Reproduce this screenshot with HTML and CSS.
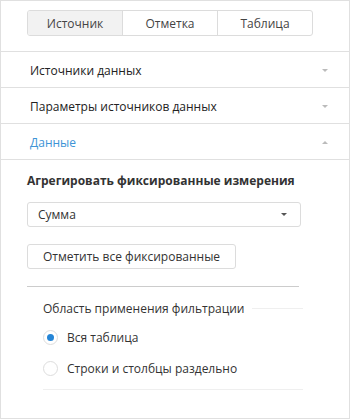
FILE: index.html
```html
<!DOCTYPE html>
<html>
<head>
    <title>Источник</title>
    <link rel="stylesheet" href="styles.css">
</head>
<body>
    <div class="panel">
        <div class="tabs-bar">
            <div class="tabs">
                <div class="tab active">Источник</div>
                <div class="tab">Отметка</div>
                <div class="tab">Таблица</div>
            </div>
        </div>

        <div class="section">
            <div class="section-head">
                <span>Источники данных</span>
                <span class="arrow down"></span>
            </div>
        </div>
        <div class="section">
            <div class="section-head">
                <span>Параметры источников данных</span>
                <span class="arrow down"></span>
            </div>
        </div>
        <div class="section open">
            <div class="section-head">
                <span>Данные</span>
                <span class="arrow up"></span>
            </div>
            <div class="section-body">
                <div class="group-title">Агрегировать фиксированные измерения</div>
                <div class="select">
                    <span>Сумма</span>
                    <span class="select-arrow"></span>
                </div>
                <button class="btn">Отметить все фиксированные</button>
                <div class="divider"></div>
                <div class="fieldset">
                    <div class="legend">
                        <span>Область применения фильтрации</span>
                        <span class="legend-line"></span>
                    </div>
                    <label class="radio">
                        <span class="radio-box checked"></span>
                        Вся таблица
                    </label>
                    <label class="radio">
                        <span class="radio-box"></span>
                        Строки и столбцы раздельно
                    </label>
                </div>
            </div>
        </div>
    </div>
</body>
</html>
```

FILE: styles.css
```css
body {
    margin: 0;
    font-family: "Open Sans", Arial, sans-serif;
    font-size: 12px;
    color: #333;
    background: #fff;
}

.panel {
    width: 350px;
    height: 419px;
    box-sizing: border-box;
    border: 1px solid #e0e0e0;
    overflow: hidden;
}

.tabs-bar {
    padding: 9px 0 0 26px;
    height: 51px;
    box-sizing: border-box;
    border-bottom: 1px solid #e0e0e0;
}

.tabs {
    display: flex;
    width: 286px;
    height: 26px;
    box-sizing: border-box;
    border: 1px solid #dcdcdc;
    border-radius: 3px;
    overflow: hidden;
}

.tab {
    flex: 1;
    display: flex;
    align-items: center;
    justify-content: center;
    color: #444;
    border-left: 1px solid #dcdcdc;
}

.tab:first-child {
    border-left: none;
}

.tab.active {
    background-color: #f2f2f2;
}

.section {
    border-bottom: 1px solid #e0e0e0;
}

.section.open {
    border-bottom: none;
}

.section-head {
    height: 35px;
    box-sizing: border-box;
    display: flex;
    align-items: center;
    justify-content: space-between;
    padding: 2px 21px 0 29px;
    color: #222;
}

.section.open .section-head {
    height: 36px;
    color: #3d94d6;
    border-bottom: 1px solid #e0e0e0;
}

.arrow {
    width: 0;
    height: 0;
    border-left: 3px solid transparent;
    border-right: 3px solid transparent;
}

.arrow.down {
    border-top: 3px solid #bbb;
}

.arrow.up {
    border-bottom: 3px solid #bbb;
}

.section-body {
    padding: 12px 0 0 26px;
}

.group-title {
    font-weight: bold;
    color: #333;
    margin-bottom: 13px;
}

.select {
    width: 274px;
    height: 25px;
    box-sizing: border-box;
    border: 1px solid #dcdcdc;
    border-radius: 3px;
    display: flex;
    align-items: center;
    justify-content: space-between;
    padding: 0 13px 0 10px;
}

.select-arrow {
    width: 0;
    height: 0;
    border-left: 3px solid transparent;
    border-right: 3px solid transparent;
    border-top: 3px solid #555;
}

.btn {
    display: block;
    margin-top: 17px;
    height: 25px;
    width: 209px;
    border: 1px solid #dcdcdc;
    border-radius: 3px;
    background: #fff;
    font-family: inherit;
    font-size: 12px;
    color: #333;
    padding: 0;
}

.divider {
    width: 272px;
    margin-top: 17px;
    border-top: 1px solid #ccc;
}

.fieldset {
    width: 260px;
    margin-left: 16px;
    padding-top: 13px;
    padding-bottom: 5px;
    border-bottom: 1px solid #efefef;
}

.legend {
    display: flex;
    align-items: center;
    gap: 8px;
    margin-bottom: 5px;
}

.legend-line {
    flex: 1;
    border-top: 1px solid #efefef;
}

.radio {
    display: flex;
    align-items: center;
    height: 31px;
    gap: 9px;
}

.radio-box {
    width: 15px;
    height: 15px;
    border: 1px solid #ddd;
    border-radius: 50%;
    box-sizing: border-box;
    background: #fff;
    position: relative;
}

.radio-box.checked::after {
    content: "";
    position: absolute;
    left: 3px;
    top: 3px;
    width: 7px;
    height: 7px;
    border-radius: 50%;
    background: #2585d6;
}
```
